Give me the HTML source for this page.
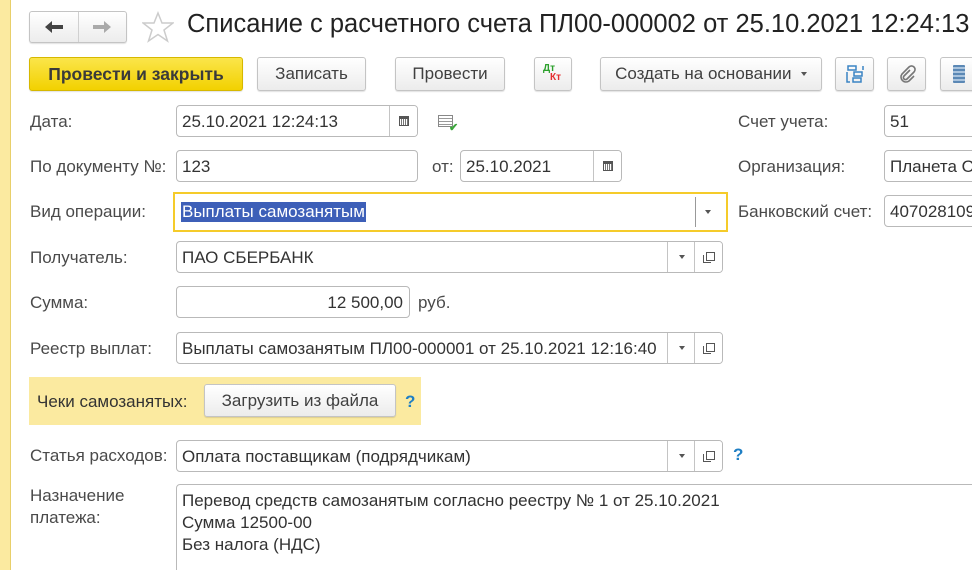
<!DOCTYPE html>
<html><head><meta charset="utf-8"><style>
*{box-sizing:border-box;margin:0;padding:0}
html{overflow:hidden;width:972px;height:570px}
body{width:972px;height:570px;overflow:hidden;background:#fff;position:relative;font-family:"Liberation Sans",sans-serif;font-size:17px;color:#333}
.a{position:absolute}
.lbl{position:absolute;color:#4a4a4a;white-space:nowrap}
.btn{position:absolute;border:1px solid #c4c4c4;border-radius:3px;background:linear-gradient(#fff,#ececec);box-shadow:0 1px 1px rgba(0,0,0,.12);display:flex;align-items:center;justify-content:center;color:#404040;font-size:17px;white-space:nowrap}
.inp{position:absolute;border:1px solid #b9b9b9;border-radius:4px;background:#fff;overflow:hidden;white-space:nowrap;color:#333}
.inp .t{position:absolute;left:5px;top:6px}
.sb{position:absolute;top:0;bottom:0;width:28px;border-left:1px solid #c4c4c4;display:flex;align-items:center;justify-content:center;background:#fff}
.tri{width:0;height:0;border-left:3.5px solid transparent;border-right:3.5px solid transparent;border-top:4px solid #555}
.cal{width:10px;height:10px;border:1.5px solid #555;border-top-width:3px;background:repeating-linear-gradient(90deg,#fff 0 1px,#777 1px 2px)}
.opn{width:11px;height:11px;position:relative}
.opn:before{content:"";position:absolute;left:0;top:3px;width:7px;height:7px;border:1px solid #555;border-right:none;border-top:none}
.opn:after{content:"";position:absolute;left:3px;top:0;width:7px;height:7px;border:1.5px solid #555}
.q{position:absolute;color:#1f7fc4;font-weight:bold;font-size:17px}
</style></head><body>
<div class="a" style="left:0;top:0;width:11px;height:570px;background:#fbeaa0;border-right:1px solid #e8cf6a"></div>

<div class="btn" style="left:29px;top:11px;width:98px;height:32px;justify-content:flex-start;padding:0">
 <div style="width:49px;height:100%;border-right:1px solid #d0d0d0;display:flex;align-items:center;justify-content:center"><svg width="20" height="14" viewBox="0 0 20 14"><path d="M1 7l7-6v4h11v4H8v4z" fill="#444"/></svg></div>
 <div style="width:48px;display:flex;align-items:center;justify-content:center"><svg width="20" height="14" viewBox="0 0 20 14"><path d="M19 7l-7-6v4H1v4h11v4z" fill="#aaa"/></svg></div>
</div>
<svg class="a" style="left:142px;top:11px" width="32" height="32" viewBox="0 0 32 32"><path d="M16 2l4 10h11l-9 7 3.5 11L16 23.5 6.5 30 10 19 1 12h11z" fill="none" stroke="#ccc" stroke-width="1.5"/></svg>
<div class="a" style="left:187px;top:10px;font-size:25.5px;color:#222;white-space:nowrap">Списание с расчетного счета ПЛ00-000002 от 25.10.2021 12:24:13</div>

<div class="btn" style="left:29px;top:57px;width:214px;height:34px;background:linear-gradient(#fbe54a,#f2d100);border-color:#d6b800;font-weight:bold;color:#3a3a3a;font-size:17.5px">Провести и закрыть</div>
<div class="btn" style="left:257px;top:57px;width:109px;height:34px">Записать</div>
<div class="btn" style="left:395px;top:57px;width:110px;height:34px">Провести</div>
<div class="btn" style="left:534px;top:57px;width:38px;height:34px"><div style="position:relative;width:24px;height:22px;font-size:10px;font-weight:bold"><span style="position:absolute;left:2px;top:0;color:#2ca02c">Дт</span><span style="position:absolute;left:9px;top:9px;color:#e53030">Кт</span></div></div>
<div class="btn" style="left:600px;top:57px;width:222px;height:34px">Создать на основании&nbsp;&nbsp;<span class="tri"></span></div>
<div class="btn" style="left:835px;top:57px;width:39px;height:34px"><svg width="20" height="20" viewBox="0 0 20 20" fill="none" stroke="#3a84c4" stroke-width="1.5"><rect x="3" y="2" width="8" height="4"/><rect x="9" y="8" width="8" height="4"/><rect x="8" y="14" width="8" height="4"/><path d="M2 8v10h3M18 2v4"/></svg></div>
<div class="btn" style="left:887px;top:57px;width:39px;height:34px"><svg width="18" height="18" viewBox="0 0 18 18" fill="none" stroke="#777" stroke-width="1.6"><path d="M12 5l-6 6a2 2 0 0 0 3 3l7-7a3.5 3.5 0 0 0-5-5l-7 7a5 5 0 0 0 7 7l5-5"/></svg></div>
<div class="btn" style="left:940px;top:57px;width:39px;height:34px;justify-content:flex-start;padding-left:12px"><div style="width:12px;height:18px;background:repeating-linear-gradient(#5b88b5 0 2px,#a9c3dd 2px 4px);border-radius:1px"></div></div>

<div class="lbl" style="left:30px;top:112px">Дата:</div>
<div class="inp" style="left:176px;top:105px;width:242px;height:32px"><span class="t">25.10.2021 12:24:13</span><div class="sb" style="right:0"><div class="cal"></div></div></div>
<div class="a" style="left:438px;top:115px;width:15px;height:12px;border:1px solid #888;background:repeating-linear-gradient(#fff 0 2px,#999 2px 3px)"></div>
<div class="a" style="left:449px;top:121px;color:#3aa53a;font-size:11px;font-weight:bold">✔</div>

<div class="lbl" style="left:30px;top:157px">По документу №:</div>
<div class="inp" style="left:176px;top:150px;width:242px;height:32px"><span class="t">123</span></div>
<div class="lbl" style="left:432px;top:157px">от:</div>
<div class="inp" style="left:460px;top:150px;width:162px;height:32px"><span class="t">25.10.2021</span><div class="sb" style="right:0"><div class="cal"></div></div></div>

<div class="lbl" style="left:738px;top:112px">Счет учета:</div>
<div class="inp" style="left:884px;top:105px;width:100px;height:32px"><span class="t">51</span></div>
<div class="lbl" style="left:738px;top:157px">Организация:</div>
<div class="inp" style="left:884px;top:150px;width:100px;height:32px"><span class="t">Планета О</span></div>
<div class="lbl" style="left:738px;top:202px">Банковский счет:</div>
<div class="inp" style="left:884px;top:195px;width:100px;height:32px"><span class="t">407028109</span></div>

<div class="lbl" style="left:30px;top:202px">Вид операции:</div>
<div class="a" style="left:173px;top:192px;width:555px;height:40px;border:2px solid #f5cb2a;background:#fff">
 <span class="a" style="left:6px;top:8px;background:#3d5fb8;color:#fff;padding:0 1px">Выплаты самозанятым</span>
 <div class="a" style="left:520px;top:3px;bottom:3px;width:1px;background:#999"></div>
 <div class="a" style="left:530px;top:16px"><div class="tri"></div></div>
</div>

<div class="lbl" style="left:30px;top:248px">Получатель:</div>
<div class="inp" style="left:176px;top:241px;width:547px;height:32px"><span class="t">ПАО СБЕРБАНК</span><div class="sb" style="right:27px"><div class="tri"></div></div><div class="sb" style="right:0;width:28px"><div class="opn"></div></div></div>

<div class="lbl" style="left:30px;top:293px">Сумма:</div>
<div class="inp" style="left:176px;top:286px;width:234px;height:32px"><span class="t" style="left:auto;right:6px">12 500,00</span></div>
<div class="lbl" style="left:418px;top:293px">руб.</div>

<div class="lbl" style="left:30px;top:339px">Реестр выплат:</div>
<div class="inp" style="left:176px;top:332px;width:547px;height:32px"><span class="t">Выплаты самозанятым ПЛ00-000001 от 25.10.2021 12:16:40</span><div class="sb" style="right:27px"><div class="tri"></div></div><div class="sb" style="right:0"><div class="opn"></div></div></div>

<div class="a" style="left:29px;top:377px;width:392px;height:48px;background:#fbeaa0"></div>
<div class="lbl" style="left:37px;top:392px;color:#333">Чеки самозанятых:</div>
<div class="btn" style="left:204px;top:384px;width:192px;height:33px">Загрузить из файла</div>
<div class="q" style="left:405px;top:392px">?</div>

<div class="lbl" style="left:30px;top:446px">Статья расходов:</div>
<div class="inp" style="left:176px;top:440px;width:547px;height:32px"><span class="t">Оплата поставщикам (подрядчикам)</span><div class="sb" style="right:27px"><div class="tri"></div></div><div class="sb" style="right:0"><div class="opn"></div></div></div>
<div class="q" style="left:733px;top:445px">?</div>

<div class="lbl" style="left:30px;top:485px;line-height:22px">Назначение<br>платежа:</div>
<div class="inp" style="left:176px;top:484px;width:820px;height:90px;line-height:22px"><span class="t" style="top:5px">Перевод средств самозанятым согласно реестру № 1 от 25.10.2021<br>Сумма 12500-00<br>Без налога (НДС)</span></div>
</body></html>
